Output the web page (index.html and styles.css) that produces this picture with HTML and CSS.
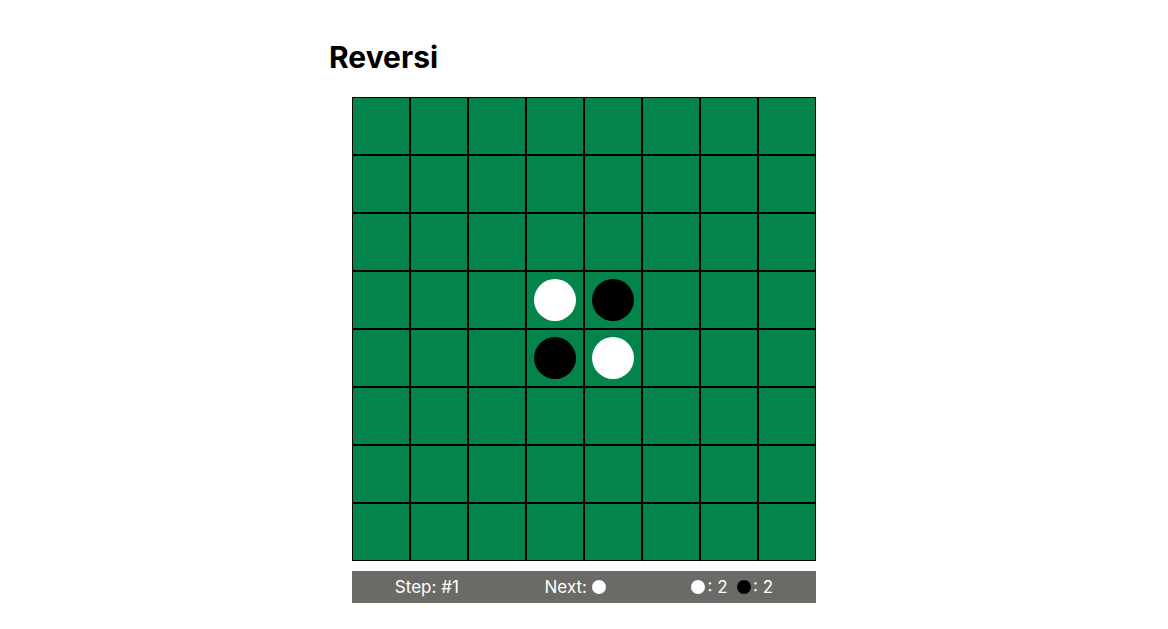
FILE: index.html
```html
<!DOCTYPE html>
<html>
<head>
<meta charset="utf-8">
<title>Reversi</title>
<link rel="stylesheet" href="styles.css">
</head>
<body>
<div class="app">
  <h1 class="title">Reversi</h1>
  <div class="board" id="board">
    <div class="cell"></div><div class="cell"></div><div class="cell"></div><div class="cell"></div><div class="cell"></div><div class="cell"></div><div class="cell"></div><div class="cell"></div>
    <div class="cell"></div><div class="cell"></div><div class="cell"></div><div class="cell"></div><div class="cell"></div><div class="cell"></div><div class="cell"></div><div class="cell"></div>
    <div class="cell"></div><div class="cell"></div><div class="cell"></div><div class="cell"></div><div class="cell"></div><div class="cell"></div><div class="cell"></div><div class="cell"></div>
    <div class="cell"></div><div class="cell"></div><div class="cell"></div><div class="cell"><span class="disc white"></span></div><div class="cell"><span class="disc black"></span></div><div class="cell"></div><div class="cell"></div><div class="cell"></div>
    <div class="cell"></div><div class="cell"></div><div class="cell"></div><div class="cell"><span class="disc black"></span></div><div class="cell"><span class="disc white"></span></div><div class="cell"></div><div class="cell"></div><div class="cell"></div>
    <div class="cell"></div><div class="cell"></div><div class="cell"></div><div class="cell"></div><div class="cell"></div><div class="cell"></div><div class="cell"></div><div class="cell"></div>
    <div class="cell"></div><div class="cell"></div><div class="cell"></div><div class="cell"></div><div class="cell"></div><div class="cell"></div><div class="cell"></div><div class="cell"></div>
    <div class="cell"></div><div class="cell"></div><div class="cell"></div><div class="cell"></div><div class="cell"></div><div class="cell"></div><div class="cell"></div><div class="cell"></div>
  </div>
  <div class="status">
    <span class="item">Step: #1</span>
    <span class="item">Next: <span class="mini white"></span></span>
    <span class="item"><span class="mini score white"></span>: 2&nbsp;&nbsp;<span class="mini score black"></span>: 2</span>
  </div>
</div>
</body>
</html>
```

FILE: styles.css
```css
* { box-sizing: border-box; }
html, body { margin: 0; padding: 0; background: #fff; }
body {
  font-family: Inter, "Helvetica Neue", Arial, sans-serif;
  color: #000;
}
.app {
  width: 510px;
  margin: 0 auto;
  padding-top: 39px;
  display: flex;
  flex-direction: column;
  align-items: center;
}
.title {
  align-self: flex-start;
  margin: 0 0 22px 0;
  font-size: 30px;
  font-weight: 700;
  line-height: 36px;
}
.board {
  display: grid;
  grid-template-columns: repeat(8, 58px);
  grid-template-rows: repeat(8, 58px);
  width: 464px;
}
.cell {
  background: #03844b;
  border: 1px solid #000;
  display: flex;
  align-items: center;
  justify-content: center;
}
.disc {
  width: 42px;
  height: 42px;
  border-radius: 50%;
}
.white { background: #fff; }
.black { background: #000; }
.status {
  margin-top: 10px;
  width: 464px;
  height: 32px;
  background: #6c6a66;
  color: #fff;
  font-size: 17px;
  line-height: 32px;
  display: flex;
  align-items: center;
  justify-content: space-around;
}
.item {
  white-space: pre;
}
.mini {
  display: inline-block;
  width: 14px;
  height: 14px;
  border-radius: 50%;
  vertical-align: -1px;
}
.mini.score { margin-right: 2px; }
```
